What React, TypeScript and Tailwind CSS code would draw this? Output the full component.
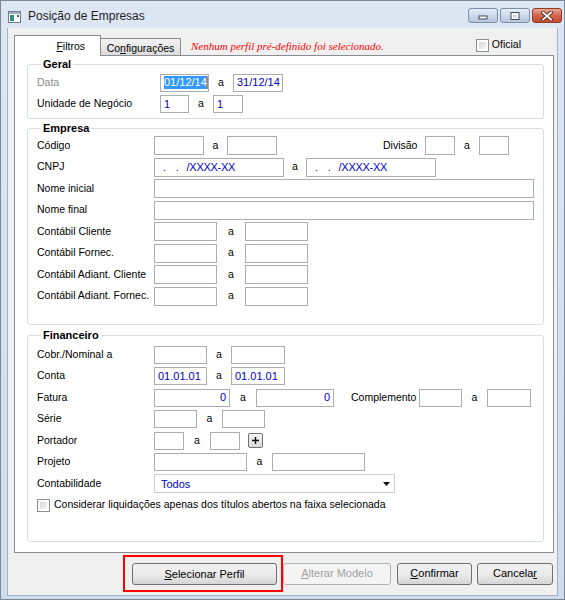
import React from 'react';

const sans = "font-['Liberation_Sans',Arial,sans-serif]";

function Box({
  w,
  tall,
  right,
  className = '',
  children,
}: {
  w: string;
  tall?: boolean;
  right?: boolean;
  className?: string;
  children?: React.ReactNode;
}) {
  return (
    <div
      className={`${w} ${tall ? 'h-[19px]' : 'h-[18px]'} ${right ? 'justify-end pr-[3px]' : 'pl-[3px]'} shrink-0 border border-[#abadb3] bg-white flex items-center text-[11px] leading-none text-[#0000cc] ${className}`}
    >
      {children}
    </div>
  );
}

function A({ w }: { w: string }) {
  return <span className={`${w} shrink-0 text-center`}>a</span>;
}

function Row({ label, lw = 'w-[117px]', children }: { label?: string; lw?: string; children?: React.ReactNode }) {
  return (
    <div className="flex h-[21.5px] items-center">
      {label !== undefined && <span className={`${lw} shrink-0 whitespace-nowrap`}>{label}</span>}
      {children}
    </div>
  );
}

function Check() {
  return (
    <span className="w-[13px] h-[13px] shrink-0 border border-[#8e8f8f] bg-white p-[2px]">
      <span className="block w-full h-full bg-linear-to-br from-[#d6d6d6] to-[#f6f6f6]" />
    </span>
  );
}

function Group({ title, className = '', children }: { title: string; className?: string; children?: React.ReactNode }) {
  return (
    <fieldset className={`border border-[#d5dfe5] rounded-[3px] pl-[9px] ${className}`}>
      <legend className="ml-[4px] px-[2px] text-[11px] leading-[13px] font-bold">{title}</legend>
      {children}
    </fieldset>
  );
}

function WinButton({
  w,
  disabled,
  children,
}: {
  w: string;
  disabled?: boolean;
  children: React.ReactNode;
}) {
  return (
    <button
      type="button"
      className={`${w} h-[22px] shrink-0 rounded-[3px] border text-[11px] ${
        disabled
          ? 'border-[#adb2b5] bg-[#f4f4f4] text-[#a0a0a0]'
          : 'border-[#707070] bg-linear-to-b from-[#f2f2f2] via-[#ebebeb] to-[#d6d6d6] text-black'
      }`}
    >
      {children}
    </button>
  );
}

function TitleButton({ kind }: { kind: 'min' | 'max' | 'close' }) {
  const base = 'h-[15px] rounded-[3px] border flex items-center justify-center';
  if (kind === 'close') {
    return (
      <div className={`${base} w-[30px] border-[#8d3b2b] bg-linear-to-b from-[#e8a493] via-[#d3644a] to-[#c24a2f]`}>
        <svg width="12" height="10" viewBox="0 0 12 10">
          <path d="M2 1.5 L10 8.5 M10 1.5 L2 8.5" stroke="#4a2a24" strokeWidth="3.6" strokeLinecap="square" />
          <path d="M2 1.5 L10 8.5 M10 1.5 L2 8.5" stroke="#ffffff" strokeWidth="1.8" strokeLinecap="square" />
        </svg>
      </div>
    );
  }
  return (
    <div className={`${base} w-[30px] border-[#7c8ea6] bg-linear-to-b from-[#e6eef8] via-[#cbd9ea] to-[#b6c8df]`}>
      {kind === 'min' ? (
        <svg width="10" height="8" viewBox="0 0 10 8">
          <rect x="1" y="4" width="8" height="3" fill="#ffffff" stroke="#3d4a5a" strokeWidth="1" />
        </svg>
      ) : (
        <svg width="10" height="8" viewBox="0 0 10 8">
          <rect x="1" y="0.5" width="8" height="7" fill="#ffffff" stroke="#3d4a5a" strokeWidth="1" />
          <rect x="3" y="3" width="4" height="2.5" fill="#c8d4e2" />
        </svg>
      )}
    </div>
  );
}

export default function App() {
  return (
    <div
      className={`w-[565px] h-[600px] flex flex-col border border-[#7d8896] bg-linear-to-b from-[#dde7f4] to-[#cfdcee] ${sans} text-[10.5px] text-black overflow-hidden`}
    >
      {/* Title bar */}
      <div className="h-[27px] shrink-0 flex items-start pl-[7px] pr-[2px]">
        <svg className="mt-[10px]" width="13" height="12" viewBox="0 0 13 12">
          <rect x="0.5" y="0.5" width="12" height="11" fill="#ffffff" stroke="#6f7c8c" />
          <rect x="1" y="1" width="11" height="2" fill="#9fb2c8" />
          <rect x="2" y="4" width="4" height="6" fill="#2f8f7a" />
          <rect x="9" y="4" width="2" height="2" fill="#50555c" />
        </svg>
        <span className="mt-[7px] ml-[7px] text-[12px] leading-[16px] text-[#1e1e1e]">Posição de Empresas</span>
        <div className="ml-auto mt-[7px] flex gap-[2px]">
          <TitleButton kind="min" />
          <TitleButton kind="max" />
          <TitleButton kind="close" />
        </div>
      </div>

      {/* Client area */}
      <div className="mx-[6px] h-[568px] shrink-0 border border-t-0 border-[#a3b2c4] bg-[#f0f0f0] flex flex-col pt-[7px] pl-[6px] pr-[3px]">
        {/* Tabs header */}
        <div className="h-[20px] shrink-0 flex items-end">
          <div className="relative z-10 -mb-px w-[87px] h-[21px] border border-b-0 border-[#898c95] bg-white flex justify-end pr-[15px] pt-[3px]">
            <span>
              <span className="underline">F</span>iltros
            </span>
          </div>
          <div className="w-[80px] h-[17px] border-t border-r border-[#898c95] bg-linear-to-b from-[#f3f3f3] to-[#dcdcdc] flex justify-center pt-[2px]">
            <span>
              Co<span className="underline">n</span>figurações
            </span>
          </div>
          <span className="self-center mt-[2px] ml-[10px] text-[11px] italic text-[#ff0000] font-['Liberation_Serif',serif]">
            Nenhum perfil pré-definido foi selecionado.
          </span>
          <div className="self-center ml-auto mr-[33px] flex items-center gap-[3px]">
            <Check />
            <span>Oficial</span>
          </div>
        </div>

        {/* Tab panel */}
        <div className="h-[498px] shrink-0 border border-[#898c95] bg-white pl-[12px] pr-[9px] pt-[2px] flex flex-col">
          <Group title="Geral" className="pt-[1px] pb-[3px]">
            <Row label="Data" lw="w-[123px] text-[#8a8a8a]">
              <Box w="w-[49px]" className="border-[#7da2ce]">
                <span className="bg-[#3399ff] text-white leading-[13px]">01/12/14</span>
                <span className="w-px h-[13px] bg-[#e07a1f]" />
              </Box>
              <A w="w-[24px]" />
              <Box w="w-[50px]">31/12/14</Box>
            </Row>
            <Row label="Unidade de Negócio" lw="w-[123px]">
              <Box w="w-[29px]">1</Box>
              <A w="w-[24px]" />
              <Box w="w-[30px]">1</Box>
            </Row>
          </Group>

          <Group title="Empresa" className="mt-[3px] pb-[17px]">
            <Row label="Código">
              <Box w="w-[50px]" tall />
              <A w="w-[23px]" />
              <Box w="w-[50px]" tall />
              <span className="ml-[106px] w-[42px] shrink-0">Divisão</span>
              <Box w="w-[30px]" tall />
              <A w="w-[24px]" />
              <Box w="w-[30px]" tall />
            </Row>
            <Row label="CNPJ">
              <Box w="w-[130px]" tall className="pl-[8px] text-[10.5px] tracking-tight">
                <span>.</span>
                <span className="ml-[10px]">.</span>
                <span className="ml-[8px]">/XXXX-XX</span>
              </Box>
              <A w="w-[22px]" />
              <Box w="w-[130px]" tall className="pl-[8px] text-[10.5px] tracking-tight">
                <span>.</span>
                <span className="ml-[10px]">.</span>
                <span className="ml-[8px]">/XXXX-XX</span>
              </Box>
            </Row>
            <Row label="Nome inicial">
              <Box w="w-[380px]" tall />
            </Row>
            <Row label="Nome final">
              <Box w="w-[380px]" tall />
            </Row>
            <Row label="Contábil Cliente">
              <Box w="w-[63px]" tall />
              <A w="w-[28px]" />
              <Box w="w-[63px]" tall />
            </Row>
            <Row label="Contábil Fornec.">
              <Box w="w-[63px]" tall />
              <A w="w-[28px]" />
              <Box w="w-[63px]" tall />
            </Row>
            <Row label="Contábil Adiant. Cliente">
              <Box w="w-[63px]" tall />
              <A w="w-[28px]" />
              <Box w="w-[63px]" tall />
            </Row>
            <Row label="Contábil Adiant. Fornec.">
              <Box w="w-[63px]" tall />
              <A w="w-[28px]" />
              <Box w="w-[63px]" tall />
            </Row>
          </Group>

          <Group title="Financeiro" className="mt-[4px] pt-[2px] pb-[25px]">
            <Row label="Cobr./Nominal a">
              <Box w="w-[53px]" />
              <A w="w-[24px]" />
              <Box w="w-[54px]" />
            </Row>
            <Row label="Conta">
              <Box w="w-[53px]">01.01.01</Box>
              <A w="w-[24px]" />
              <Box w="w-[54px]">01.01.01</Box>
            </Row>
            <Row label="Fatura">
              <Box w="w-[76px]" right>0</Box>
              <A w="w-[26px]" />
              <Box w="w-[78px]" right>0</Box>
              <span className="ml-[17px] w-[68px] shrink-0">Complemento</span>
              <Box w="w-[43px]" />
              <A w="w-[25px]" />
              <Box w="w-[44px]" />
            </Row>
            <Row label="Série">
              <Box w="w-[43px]" />
              <A w="w-[25px]" />
              <Box w="w-[43px]" />
            </Row>
            <Row label="Portador">
              <Box w="w-[30px]" />
              <A w="w-[26px]" />
              <Box w="w-[30px]" />
              <span className="ml-[8px] w-[15px] h-[15px] shrink-0 rounded-[2px] border border-[#707070] bg-linear-to-b from-[#f6f6f6] to-[#d8d8d8] flex items-center justify-center">
                <svg width="9" height="9" viewBox="0 0 9 9">
                  <path d="M4.5 1 V8 M1 4.5 H8" stroke="#111" strokeWidth="1.4" />
                </svg>
              </span>
            </Row>
            <Row label="Projeto">
              <Box w="w-[93px]" />
              <A w="w-[25px]" />
              <Box w="w-[93px]" />
            </Row>
            <Row label="Contabilidade">
              <div className="w-[241px] h-[19px] shrink-0 border border-[#cfcfcf] bg-white flex items-center pl-[6px] pr-[4px] text-[11px] text-[#0000cc]">
                <span>Todos</span>
                <svg className="ml-auto" width="7" height="4" viewBox="0 0 7 4">
                  <path d="M0 0 H7 L3.5 4 Z" fill="#111" />
                </svg>
              </div>
            </Row>
            <Row>
              <Check />
              <span className="ml-[4px]">
                Considerar liquidações apenas dos títulos abertos na faixa selecionada
              </span>
            </Row>
          </Group>
        </div>

        {/* Buttons */}
        <div className="mt-[2px] mr-[1px] flex items-center justify-end">
          <div className="w-[160px] h-[37px] border-2 border-[#ff0000] pl-[7px] pt-[6px]">
            <WinButton w="w-[145px]">
              <span className="underline">S</span>elecionar Perfil
            </WinButton>
          </div>
          <WinButton w="w-[108px]" disabled>
            <span className="underline">A</span>lterar Modelo
          </WinButton>
          <div className="w-[6px]" />
          <WinButton w="w-[75px]">
            <span className="underline">C</span>onfirmar
          </WinButton>
          <div className="w-[5px]" />
          <WinButton w="w-[76px]">
            Cancela<span className="underline">r</span>
          </WinButton>
        </div>
      </div>
    </div>
  );
}
